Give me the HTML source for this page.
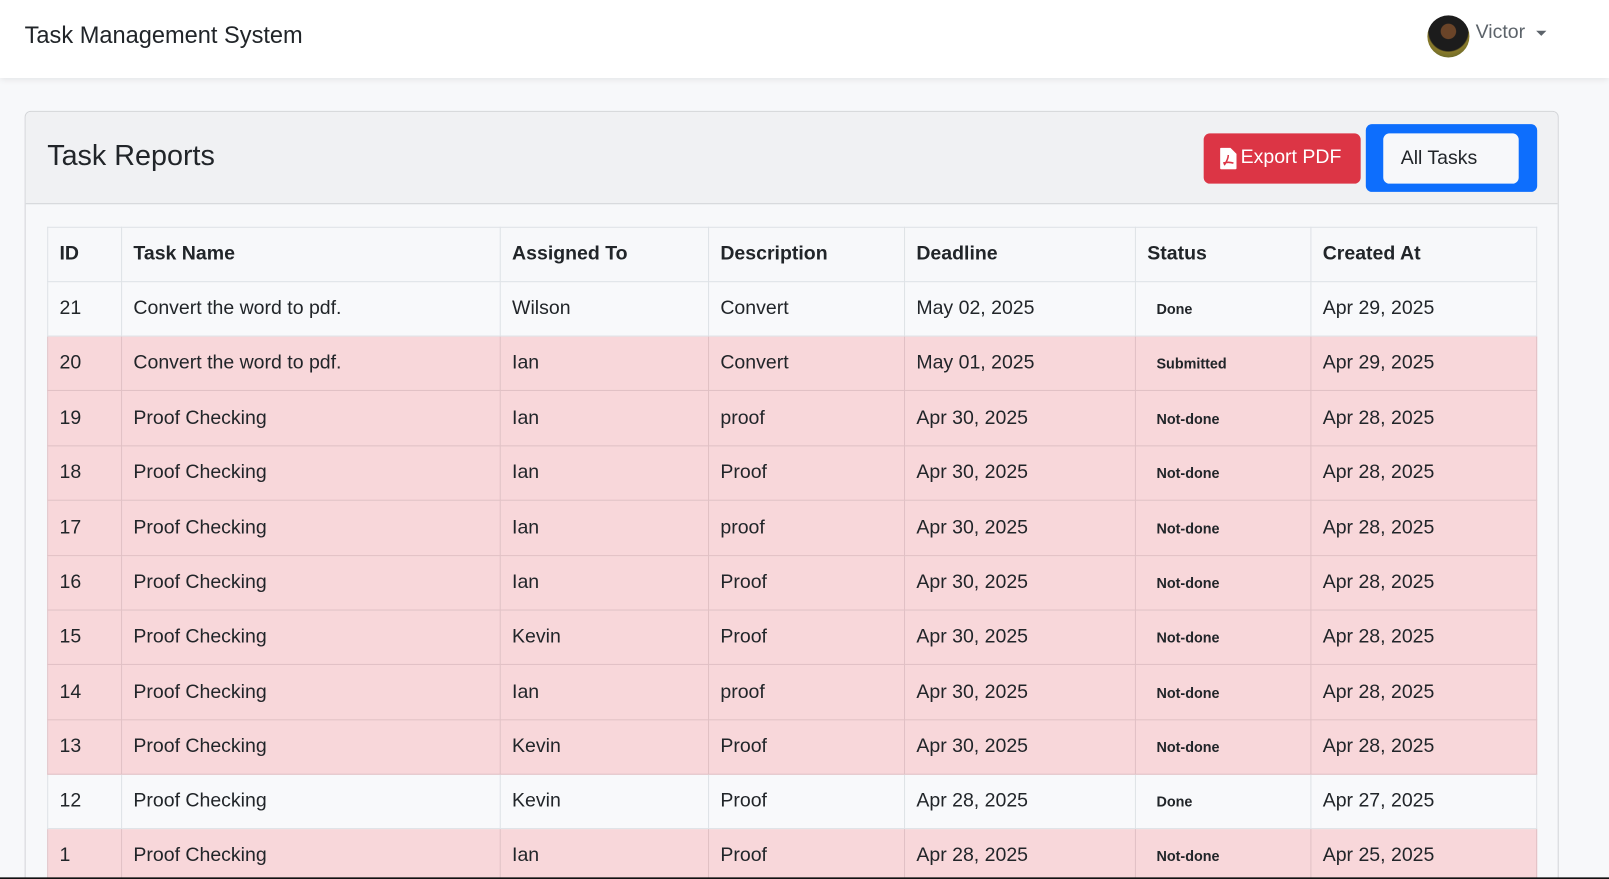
<!DOCTYPE html>
<html><head><meta charset="utf-8"><style>
*{box-sizing:border-box;margin:0;padding:0}
html,body{width:1609px;height:879px;overflow:hidden}
body{background:#f7f8fa;font-family:"Liberation Sans",sans-serif;color:#212529;position:relative}
#w{position:absolute;left:0;top:0;width:1568px;height:857px;overflow:hidden;transform:scale(1.02615);transform-origin:0 0}
.nav{position:absolute;left:0;top:0;width:1568px;height:76px;background:#fff;box-shadow:0 2px 6px rgba(0,0,0,.08)}
.brand{position:absolute;left:24px;top:21px;font-size:23px;color:#212529}
.av{position:absolute;left:1391px;top:15px;width:41px;height:41px;border-radius:50%;background:radial-gradient(circle at 50% 38%,#6a4428 0 22%,#1c1c1c 24% 58%,#8a7a2a 62%,#4a5a2a 100%)}
.user{position:absolute;left:1438px;top:21px;font-size:19px;color:#5c636a}
.caret{position:absolute;left:1497px;top:30px;border-left:5px solid transparent;border-right:5px solid transparent;border-top:5px solid #5c636a}
.card{position:absolute;left:24px;top:108px;width:1495px;height:760px;border:1px solid #d3d5d8;border-radius:6px;background:#f7f8fa;overflow:hidden}
.ch{height:90px;background:#f0f1f3;border-bottom:1px solid #d3d5d8;position:relative}
.ch h1{position:absolute;left:21px;top:27px;font-size:28px;font-weight:normal;color:#212529}
.btn-r{position:absolute;left:1148px;top:21px;width:153px;height:49px;background:#dc3545;border-radius:6px;color:#fff;font-size:19px;padding:13px 0 0 36px}
.btn-r svg{position:absolute;left:16px;top:14px}
.btn-b{position:absolute;left:1306px;top:12px;width:167px;height:66px;background:#0d6efd;border-radius:6px}
.btn-b div{position:absolute;left:17px;top:9px;width:132px;height:49px;background:#f7f8fa;border-radius:6px;font-size:19px;padding:14px 0 0 17px}
table{position:absolute;left:21px;top:112px;border-collapse:collapse;width:1451px;table-layout:fixed;font-size:19px}
td,th{border:1px solid #dee2e6;padding:0 11px;text-align:left;vertical-align:middle;white-space:nowrap}
th{font-weight:bold;height:53px;background:#f7f8fa;font-size:19px}
tr.w td{background:#f8f9fb}
tr.p td{background:#f8d7da;border-color:#e0c0c4}
.s{font-size:14px;font-weight:bold;padding-left:20px}
.bar{position:absolute;left:0;top:855px;width:1568px;height:10px;background:#111}
</style></head><body><div id="w">
<div class="nav"><div class="brand">Task Management System</div><div class="av"></div><div class="user">Victor</div><div class="caret"></div></div>
<div class="card">
<div class="ch"><h1>Task Reports</h1>
<div class="btn-r"><svg width="16" height="21" viewBox="0 0 16 21"><path d="M1 0h9l6 6v14a1 1 0 0 1-1 1H1a1 1 0 0 1-1-1V1a1 1 0 0 1 1-1z" fill="#fff"/><path d="M4 17c2-3 4-7 4-10M3 15c3-1 7-1 10 0" stroke="#dc3545" stroke-width="1.5" fill="none"/></svg>Export PDF</div>
<div class="btn-b"><div>All Tasks</div></div></div>
<table>
<colgroup><col style="width:72px"><col style="width:369px"><col style="width:203px"><col style="width:191px"><col style="width:225px"><col style="width:171px"><col style="width:220px"></colgroup>
<tr><th>ID</th><th>Task Name</th><th>Assigned To</th><th>Description</th><th>Deadline</th><th>Status</th><th>Created At</th></tr>
<tr class="w" style="height:53px"><td>21</td><td>Convert the word to pdf.</td><td>Wilson</td><td>Convert</td><td>May 02, 2025</td><td class="s">Done</td><td>Apr 29, 2025</td></tr>
<tr class="p" style="height:53px"><td>20</td><td>Convert the word to pdf.</td><td>Ian</td><td>Convert</td><td>May 01, 2025</td><td class="s">Submitted</td><td>Apr 29, 2025</td></tr>
<tr class="p" style="height:54px"><td>19</td><td>Proof Checking</td><td>Ian</td><td>proof</td><td>Apr 30, 2025</td><td class="s">Not-done</td><td>Apr 28, 2025</td></tr>
<tr class="p" style="height:53px"><td>18</td><td>Proof Checking</td><td>Ian</td><td>Proof</td><td>Apr 30, 2025</td><td class="s">Not-done</td><td>Apr 28, 2025</td></tr>
<tr class="p" style="height:54px"><td>17</td><td>Proof Checking</td><td>Ian</td><td>proof</td><td>Apr 30, 2025</td><td class="s">Not-done</td><td>Apr 28, 2025</td></tr>
<tr class="p" style="height:53px"><td>16</td><td>Proof Checking</td><td>Ian</td><td>Proof</td><td>Apr 30, 2025</td><td class="s">Not-done</td><td>Apr 28, 2025</td></tr>
<tr class="p" style="height:53px"><td>15</td><td>Proof Checking</td><td>Kevin</td><td>Proof</td><td>Apr 30, 2025</td><td class="s">Not-done</td><td>Apr 28, 2025</td></tr>
<tr class="p" style="height:54px"><td>14</td><td>Proof Checking</td><td>Ian</td><td>proof</td><td>Apr 30, 2025</td><td class="s">Not-done</td><td>Apr 28, 2025</td></tr>
<tr class="p" style="height:53px"><td>13</td><td>Proof Checking</td><td>Kevin</td><td>Proof</td><td>Apr 30, 2025</td><td class="s">Not-done</td><td>Apr 28, 2025</td></tr>
<tr class="w" style="height:53px"><td>12</td><td>Proof Checking</td><td>Kevin</td><td>Proof</td><td>Apr 28, 2025</td><td class="s">Done</td><td>Apr 27, 2025</td></tr>
<tr class="p" style="height:53px"><td>1</td><td>Proof Checking</td><td>Ian</td><td>Proof</td><td>Apr 28, 2025</td><td class="s">Not-done</td><td>Apr 25, 2025</td></tr>
</table>
</div>
<div class="bar"></div>
</div></body></html>
